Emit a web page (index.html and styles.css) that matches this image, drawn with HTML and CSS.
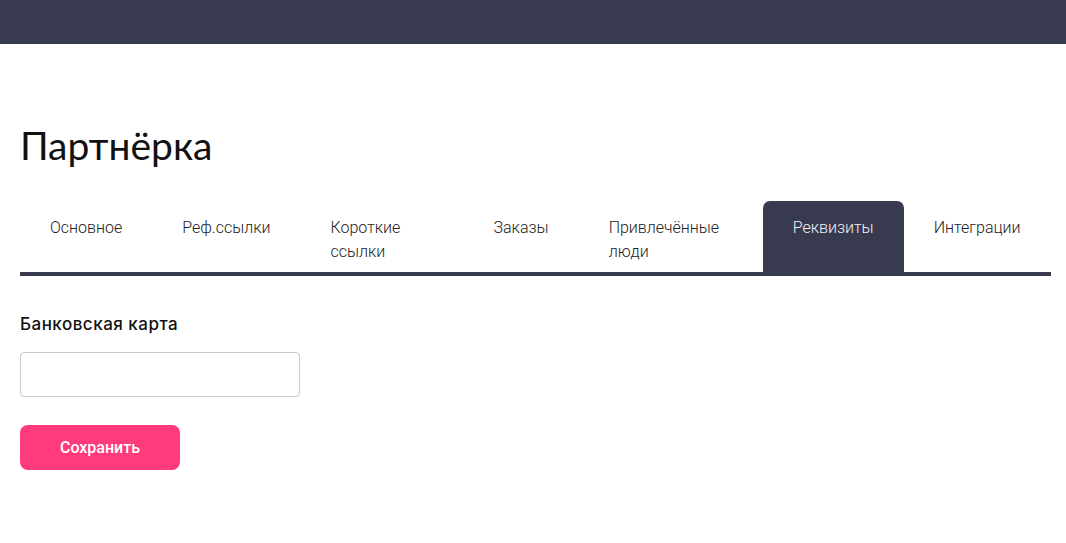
FILE: index.html
```html
<!DOCTYPE html>
<html lang="ru">
<head>
    <meta charset="UTF-8">
    <meta name="viewport" content="width=device-width, initial-scale=1.0">
    <title>Партнёрка</title>
    <link rel="stylesheet" href="styles.css">
</head>
<body>
    <header class="topbar"></header>

    <main class="page">
        <h1 class="page-title">Партнёрка</h1>

        <nav class="tabs">
            <a class="tab">Основное</a>
            <a class="tab">Реф.ссылки</a>
            <a class="tab tab-short">Короткие ссылки</a>
            <a class="tab">Заказы</a>
            <a class="tab tab-people">Привлечённые люди</a>
            <a class="tab active">Реквизиты</a>
            <a class="tab tab-last">Интеграции</a>
        </nav>

        <form class="requisites" onsubmit="return false">
            <label class="field-label" for="card">Банковская карта</label>
            <input class="field-input" id="card" type="text">
            <button class="btn-save" type="submit">Сохранить</button>
        </form>
    </main>
</body>
</html>
```

FILE: styles.css
```css
body {
    margin: 0;
    padding: 0;
    background: #fff;
    font-family: Roboto, Arial, sans-serif;
    color: #222;
}
.topbar {
    height: 44px;
    background: #383a4f;
}
.page {
    margin: 0 15px 0 20px;
}
.page-title {
    margin: 78px 0 32px;
    font-family: Lato, "Noto Sans", sans-serif;
    font-weight: 400;
    font-size: 39px;
    line-height: 47px;
    color: #111;
}
.tabs {
    display: flex;
    align-items: stretch;
    border-bottom: 4px solid #383a4f;
}
.tab {
    flex: none;
    padding: 15px 30px 8px;
    font-size: 16px;
    font-weight: 300;
    line-height: 24px;
    color: #222;
    border-radius: 7px 7px 0 0;
    cursor: pointer;
}
.tab-short {
    width: 103px;
}
.tab-people {
    width: 124px;
}
.tab-last {
    flex: 1;
}
.tab.active {
    background: #383a4f;
    color: #f2f2f4;
}
.requisites {
    display: flex;
    flex-direction: column;
    align-items: flex-start;
    padding-top: 36px;
}
.field-label {
    font-family: Inter, "Noto Sans", sans-serif;
    font-weight: 500;
    font-size: 17px;
    letter-spacing: 0.5px;
    line-height: 24px;
    color: #111;
}
.field-input {
    box-sizing: border-box;
    width: 280px;
    height: 45px;
    margin-top: 16px;
    padding: 0 12px;
    border: 1px solid #c9c9c9;
    border-radius: 4px;
    font-size: 16px;
    outline: none;
}
.btn-save {
    width: 160px;
    height: 45px;
    margin-top: 28px;
    border: none;
    border-radius: 8px;
    background: #ff3b7c;
    color: #fff;
    font-family: Roboto, Arial, sans-serif;
    font-weight: 500;
    font-size: 16px;
    cursor: pointer;
}
```
